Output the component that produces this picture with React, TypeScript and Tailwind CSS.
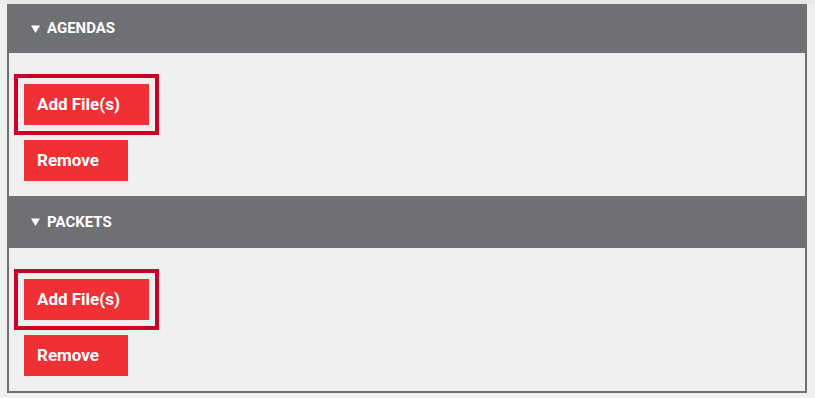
import React from 'react';

interface SectionProps {
  title: string;
  headerClass: string;
}

const Section: React.FC<SectionProps> = ({ title, headerClass }) => {
  return (
    <div>
      {/* Header */}
      <div className={`bg-[#6f7074] flex items-center pl-[24px] ${headerClass}`}>
        <svg width="9" height="8" viewBox="0 0 9 8" className="mr-[7px]">
          <polygon points="0,0.5 9,0.5 4.5,8" fill="#ffffff" />
        </svg>
        <span className="text-white font-bold text-[15px] uppercase">{title}</span>
      </div>

      {/* Body */}
      <div className="flex flex-col items-start pl-[17px] pt-[31px] pb-[15px] gap-[15px]">
        <button className="bg-[#ef3135] text-white font-bold text-[17px] w-[125px] h-[41px] text-left pl-[13px] outline-4 outline-[#cc0025] outline-offset-[6px]">
          Add File(s)
        </button>
        <button className="bg-[#ef3135] text-white font-bold text-[17px] w-[104px] h-[41px] text-left pl-[13px]">
          Remove
        </button>
      </div>
    </div>
  );
};

export default function App() {
  return (
    <div
      className="w-[815px] h-[398px] bg-[#efefef] overflow-hidden"
      style={{ fontFamily: 'Roboto, "Liberation Sans", sans-serif' }}
    >
      <div className="h-[4px] bg-[#e8e8e8]" />
      <div className="mx-[7px] w-[800px] border-x-2 border-b-2 border-[#6f7074] bg-[#efefef]">
        <div className="-mx-[2px]">
          <Section title="Agendas" headerClass="h-[49px]" />
          <Section title="Packets" headerClass="h-[52px]" />
        </div>
      </div>
    </div>
  );
}
